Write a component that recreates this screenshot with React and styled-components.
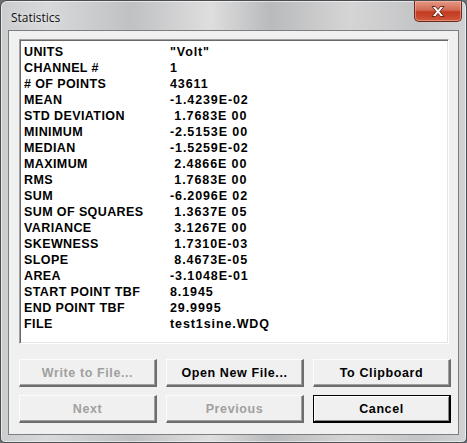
import React from "react";
import styled, { createGlobalStyle } from "styled-components";

const GlobalStyle = createGlobalStyle`
  html, body {
    margin: 0;
    padding: 0;
    background: #6b6f75;
  }
`;

const rows = [
  ["UNITS", "\"Volt\""],
  ["CHANNEL #", "1"],
  ["# OF POINTS", "43611"],
  ["MEAN", "-1.4239E-02"],
  ["STD DEVIATION", " 1.7683E 00"],
  ["MINIMUM", "-2.5153E 00"],
  ["MEDIAN", "-1.5259E-02"],
  ["MAXIMUM", " 2.4866E 00"],
  ["RMS", " 1.7683E 00"],
  ["SUM", "-6.2096E 02"],
  ["SUM OF SQUARES", " 1.3637E 05"],
  ["VARIANCE", " 3.1267E 00"],
  ["SKEWNESS", " 1.7310E-03"],
  ["SLOPE", " 8.4673E-05"],
  ["AREA", "-3.1048E-01"],
  ["START POINT TBF", "8.1945"],
  ["END POINT TBF", "29.9995"],
  ["FILE", "test1sine.WDQ"],
];

const buttons = [
  { label: "Write to File...", disabled: true },
  { label: "Open New File..." },
  { label: "To Clipboard" },
  { label: "Next", disabled: true },
  { label: "Previous", disabled: true },
  { label: "Cancel", primary: true },
];

export default function App() {
  return (
    <>
      <GlobalStyle />
      <Window>
        <TitleBar>
          <Title>Statistics</Title>
          <CloseButton>
            <svg width="16" height="13" viewBox="0 0 16 13">
              <path
                d="M2 1.5h3.5L8 4.6l2.5-3.1H14L9.9 6.5 14 11.5h-3.5L8 8.4l-2.5 3.1H2l4.1-5z"
                fill="#fff"
                stroke="#5a1c12"
                strokeWidth="0.9"
                strokeLinejoin="round"
              />
            </svg>
          </CloseButton>
        </TitleBar>
        <Client>
          <StatsBox>
            {rows.map(([label, value]) => (
              <StatRow key={label}>
                <Label>{label}</Label>
                <Value>{value}</Value>
              </StatRow>
            ))}
          </StatsBox>
          <ButtonGrid>
            {buttons.map((b) => (
              <DlgButton key={b.label} disabled={b.disabled} $primary={b.primary}>
                {b.label}
              </DlgButton>
            ))}
          </ButtonGrid>
        </Client>
      </Window>
    </>
  );
}

const Window = styled.div`
  width: 467px;
  height: 443px;
  box-sizing: border-box;
  border: 1px solid #4a4d52;
  border-radius: 7px 7px 5px 5px;
  background: linear-gradient(
    90deg,
    #cbcccd 0%,
    #d8d9da 10%,
    #c0c1c2 28%,
    #dededf 45%,
    #b9babb 58%,
    #d5d5d6 75%,
    #c3c4c5 90%,
    #d1d2d3 100%
  );
  box-shadow: inset 0 0 0 1px rgba(255, 255, 255, 0.55);
  padding: 0 7px 7px 7px;
  display: flex;
  flex-direction: column;
  overflow: hidden;
`;

const TitleBar = styled.div`
  height: 29px;
  display: flex;
  align-items: flex-start;
  flex-shrink: 0;
`;

const Title = styled.div`
  font-family: "Open Sans", "Noto Sans", sans-serif;
  font-size: 12px;
  color: #111;
  padding: 8px 0 0 3px;
  text-shadow: 0 0 6px rgba(255, 255, 255, 0.9);
`;

const CloseButton = styled.div`
  margin-left: auto;
  margin-right: -3px;
  width: 48px;
  height: 21px;
  box-sizing: border-box;
  border: 1px solid #6a2a20;
  border-top: none;
  border-radius: 0 0 5px 5px;
  background: linear-gradient(180deg, #e49a88 0%, #d36a52 45%, #c2391f 55%, #d0583c 100%);
  box-shadow: inset 0 0 0 1px rgba(255, 200, 185, 0.45);
  display: flex;
  align-items: center;
  justify-content: center;
`;

const Client = styled.div`
  flex: 1;
  background: #f0f0f0;
  border: 1px solid #7d7e80;
  padding: 8px 9px 0 10px;
  display: flex;
  flex-direction: column;
`;

const StatsBox = styled.div`
  height: 305px;
  box-sizing: border-box;
  background: #fff;
  border-top: 1px solid #a0a0a0;
  border-left: 1px solid #a0a0a0;
  border-right: 1px solid #fff;
  border-bottom: 1px solid #fff;
  box-shadow: inset 1px 1px 0 #696969, inset -1px -1px 0 #e3e3e3;
  padding: 4px 4px 0 4px;
  font-family: "Liberation Sans", Arial, sans-serif;
  font-weight: bold;
  font-size: 12.5px;
  color: #000;
`;

const StatRow = styled.div`
  display: flex;
  height: 16px;
  line-height: 16px;
  white-space: pre;
`;

const Label = styled.span`
  width: 146px;
  letter-spacing: 0.4px;
`;

const Value = styled.span`
  letter-spacing: 0.9px;
`;

const ButtonGrid = styled.div`
  display: grid;
  grid-template-columns: repeat(3, 138px);
  grid-auto-rows: 28px;
  column-gap: 9px;
  row-gap: 8px;
  margin-top: 15px;
`;

const DlgButton = styled.button`
  font-family: "Liberation Sans", Arial, sans-serif;
  font-weight: bold;
  font-size: 12.5px;
  letter-spacing: 0.6px;
  color: ${(p) => (p.disabled ? "#a0a0a0" : "#000")};
  background: #f0f0f0;
  padding: 0;
  border-style: solid;
  border-width: 1px 2px 2px 1px;
  border-color: ${(p) =>
    p.$primary ? "#000 #000 #000 #000" : "#fcfcfc #6d6d6d #6d6d6d #fcfcfc"};
  box-shadow: ${(p) =>
    p.$primary
      ? "inset 1px 1px 0 #fff, inset -1px -1px 0 #8a8a8a"
      : "inset -1px -1px 0 #a0a0a0"};
  cursor: default;
`;
